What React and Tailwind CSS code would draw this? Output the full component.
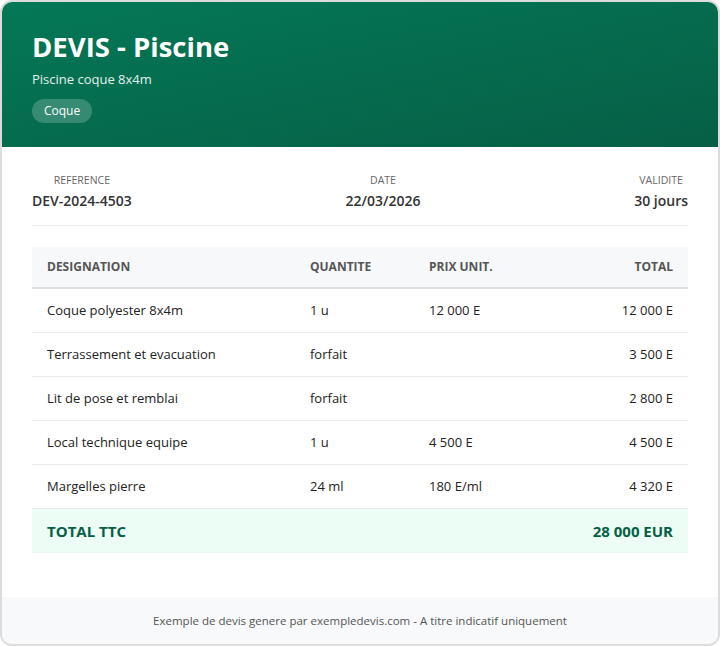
import React from "react";

const rows = [
  { name: "Coque polyester 8x4m", qty: "1 u", unit: "12 000 E", total: "12 000 E" },
  { name: "Terrassement et evacuation", qty: "forfait", unit: "", total: "3 500 E" },
  { name: "Lit de pose et remblai", qty: "forfait", unit: "", total: "2 800 E" },
  { name: "Local technique equipe", qty: "1 u", unit: "4 500 E", total: "4 500 E" },
  { name: "Margelles pierre", qty: "24 ml", unit: "180 E/ml", total: "4 320 E" },
];

const App = () => {
  return (
    <div className="w-[720px] h-[646px] bg-white font-['Open_Sans',sans-serif]">
      <div className="h-full flex flex-col border-2 border-[#dcdcdc] rounded-xl overflow-hidden">
        {/* Header */}
        <div className="h-[145px] bg-gradient-to-br from-[#047857] to-[#065f46] px-[30px] pt-[28px] text-white">
          <h1 className="text-[27.5px] leading-[34px] font-bold">DEVIS - Piscine</h1>
          <p className="mt-[6px] text-[13px] leading-[18px] text-white/90">Piscine coque 8x4m</p>
          <span className="inline-block mt-[11px] px-3 py-[3px] rounded-full bg-white/20 text-[12px] leading-[18px]">
            Coque
          </span>
        </div>

        {/* Body */}
        <div className="flex-1 px-[30px] pt-[26px]">
          <div className="flex justify-between pb-[15px] border-b border-[#ebebeb]">
            <div className="text-center">
              <div className="text-[10.5px] leading-[14px] text-[#666] uppercase">Reference</div>
              <div className="mt-[4px] text-[14px] leading-[19px] font-semibold text-[#333]">DEV-2024-4503</div>
            </div>
            <div className="text-center">
              <div className="text-[10.5px] leading-[14px] text-[#666] uppercase">Date</div>
              <div className="mt-[4px] text-[14px] leading-[19px] font-semibold text-[#333]">22/03/2026</div>
            </div>
            <div className="text-center">
              <div className="text-[10.5px] leading-[14px] text-[#666] uppercase">Validite</div>
              <div className="mt-[4px] text-[14px] leading-[19px] font-semibold text-[#333]">30 jours</div>
            </div>
          </div>

          <div className="mt-[21px] text-[13px] text-[#222]">
            <div className="grid grid-cols-[263px_119px_1fr_140px] h-[42px] items-center bg-[#f7f8fa] border-b-2 border-[#dddfe3] text-[12px] font-bold text-[#555] uppercase">
              <div className="px-[15px]">Designation</div>
              <div className="px-[15px]">Quantite</div>
              <div className="px-[15px]">Prix unit.</div>
              <div className="px-[15px] text-right">Total</div>
            </div>
            {rows.map((r) => (
              <div
                key={r.name}
                className="grid grid-cols-[263px_119px_1fr_140px] h-[44px] items-center border-b border-[#ebebeb]"
              >
                <div className="px-[15px]">{r.name}</div>
                <div className="px-[15px]">{r.qty}</div>
                <div className="px-[15px]">{r.unit}</div>
                <div className="px-[15px] text-right">{r.total}</div>
              </div>
            ))}
            <div className="flex justify-between items-center h-[44px] px-[15px] bg-[#ecfdf5] text-[15px] font-bold text-[#065f46]">
              <span>TOTAL TTC</span>
              <span>28 000 EUR</span>
            </div>
          </div>
        </div>

        {/* Footer */}
        <div className="h-[47px] pt-px bg-[#f8f9fa] flex items-center justify-center text-[11.5px] text-[#555]">
          Exemple de devis genere par exempledevis.com - A titre indicatif uniquement
        </div>
      </div>
    </div>
  );
};

export default App;
